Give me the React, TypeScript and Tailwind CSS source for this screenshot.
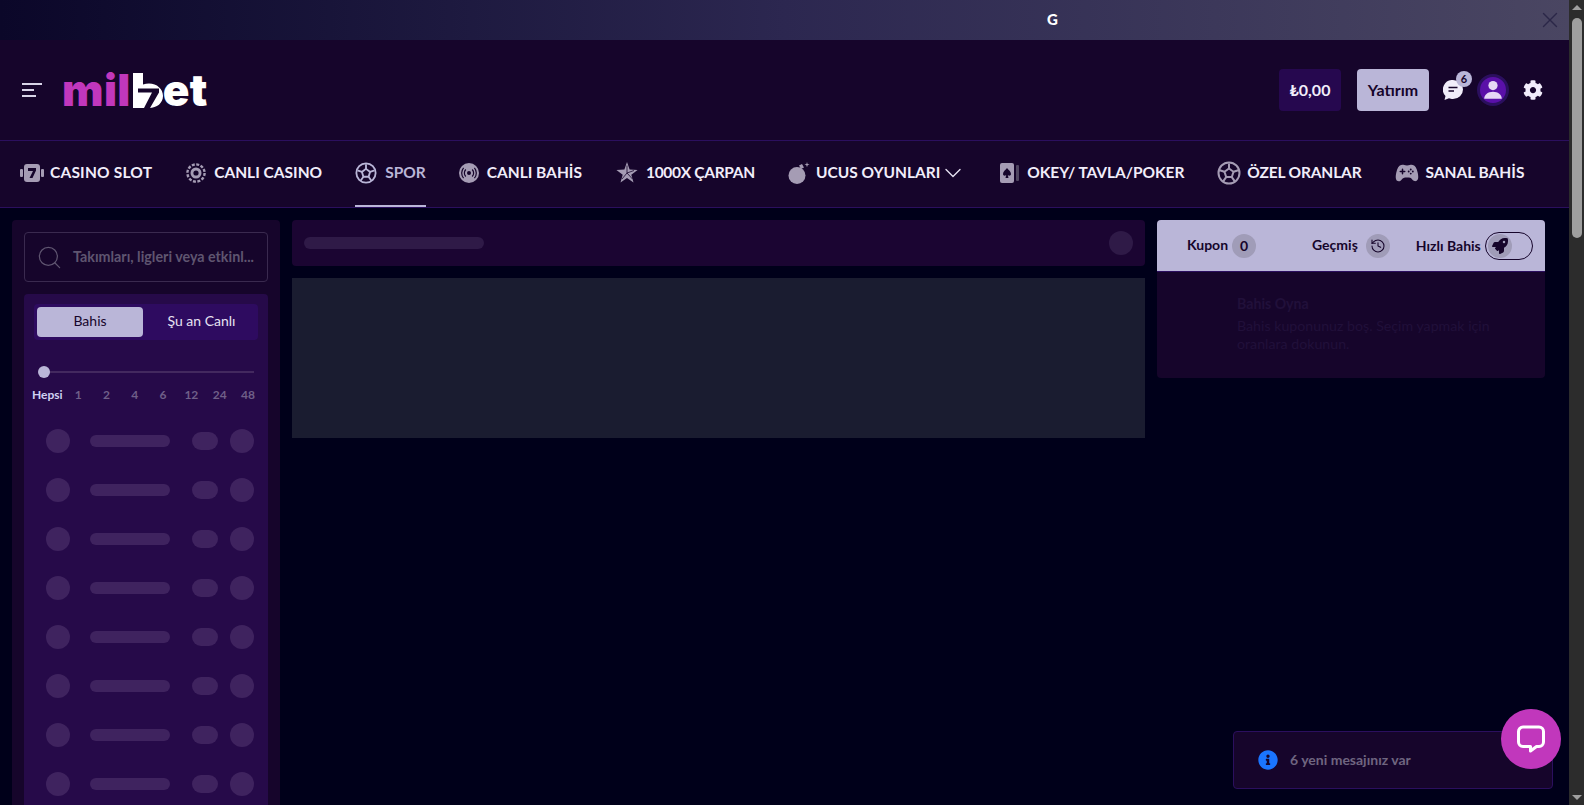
import { ChevronDown, History, Search, X } from 'lucide-react'
import { FaCog, FaInfoCircle, FaRocket } from 'react-icons/fa'
import { IoGameController } from 'react-icons/io5'
import type { ReactNode } from 'react'

const font = 'font-["Lato","Noto_Sans",sans-serif]'

function SlotIcon() {
  return (
    <svg viewBox="0 0 24 20" className="-mr-0.5 h-5 w-6" fill="#a59cb4">
      <rect x="0" y="6" width="3" height="8" rx="1" />
      <rect x="21" y="6" width="3" height="8" rx="1" />
      <rect x="4" y="1" width="16" height="18" rx="3" />
      <path d="M8 5h8v2.500L12.500 15H9.500L13 8H8z" fill="#16052b" />
    </svg>
  )
}

function ChipIcon() {
  return (
    <svg viewBox="0 0 20 20" className="h-5 w-5" fill="none">
      <circle cx="10" cy="10" r="8.600" stroke="#a59cb4" strokeWidth="2.400" strokeDasharray="3 1.500" />
      <circle cx="10" cy="10" r="5.500" fill="#a59cb4" />
      <circle cx="10" cy="10" r="2.600" fill="#16052b" />
    </svg>
  )
}

function BallIcon({ size, color }: { size: string; color: string }) {
  return (
    <svg viewBox="0 0 24 24" className={size} fill="none" stroke={color} strokeWidth="2">
      <circle cx="12" cy="12" r="10.500" />
      <path d="M12 7.500l4.500 3.300-1.700 5.300H9.200l-1.700-5.300z" />
      <path d="M12 7.500V2.500M16.500 10.800l4.800-1.600M14.800 16.100l2.900 4M9.200 16.100l-2.900 4M7.500 10.800L2.700 9.200" />
    </svg>
  )
}

function LiveIcon() {
  return (
    <svg viewBox="0 0 20 20" className="h-5 w-5" fill="none">
      <circle cx="10" cy="10" r="10" fill="#a59cb4" />
      <circle cx="10" cy="10" r="2" fill="#16052b" />
      <path d="M6.800 6.500a5 5 0 0 0 0 7M13.200 6.500a5 5 0 0 1 0 7M4.600 4.800a8 8 0 0 0 0 10.400M15.400 4.800a8 8 0 0 1 0 10.400" stroke="#16052b" strokeWidth="1.200" />
    </svg>
  )
}

function StarIcon() {
  return (
    <svg viewBox="0 0 22 22" className="h-[22px] w-[22px]">
      <path d="M11 0l2.600 7.600 8 .3-6.300 4.900 2.200 7.700L11 16l-6.500 4.500 2.200-7.700L.4 7.900l8-.3z" fill="#a59cb4" />
      <path d="M11 3.500V11l-5 6M11 11l5.500 6M11 11l7-2.500" stroke="#16052b" strokeWidth=".8" fill="none" />
    </svg>
  )
}

function BombIcon() {
  return (
    <svg viewBox="0 0 22 22" className="-mr-0.5 h-[22px] w-[22px]" fill="#a59cb4">
      <circle cx="9" cy="13.500" r="8.500" />
      <path d="M11 3.500l3-1.500 2 3.500-3 1.500z" />
      <path d="M19 0l.6 2 2 .6-2 .6-.6 2-.6-2-2-.6 2-.6z" />
    </svg>
  )
}

function CardIcon() {
  return (
    <svg viewBox="0 0 20 20" className="h-5 w-5">
      <rect x="16" y="2" width="3" height="16" rx="1" fill="#4f4560" />
      <rect x="0" y="0" width="14" height="20" rx="2" fill="#a59cb4" />
      <path d="M7 5c1.500 2 4 3.500 4 6 0 1.600-2 2.200-3.200 1l.7 3h-3l.7-3C4.900 13.200 3 12.600 3 11c0-2.500 2.500-4 4-6z" fill="#16052b" />
    </svg>
  )
}

function LiveChatIcon() {
  return (
    <svg viewBox="0 0 28 28" className="h-7 w-7" fill="none" stroke="white" strokeWidth="3" strokeLinejoin="round">
      <path d="M6 2h16a4.500 4.500 0 0 1 4.500 4.500v10.500a4.500 4.500 0 0 1-4.500 4.500h-2.500l-6 4.500v-4.500H6A4.500 4.500 0 0 1 1.500 17V6.500A4.500 4.500 0 0 1 6 2z" />
    </svg>
  )
}

type NavItemProps = {
  icon: ReactNode
  label: string
  active?: boolean
  trailing?: ReactNode
  className?: string
  labelClassName?: string
}

function NavItem({ icon, label, active, trailing, className = '', labelClassName = '' }: NavItemProps) {
  return (
    <div className={`flex h-[66px] items-center gap-2 border-b-2 ${active ? 'border-[#bab6d8]' : 'border-transparent'} ${className}`}>
      {icon}
      <span className={`whitespace-nowrap text-[15.500px] font-bold ${active ? 'text-[#bab6d8]' : 'text-[#f1edfa]'} ${labelClassName}`}>{label}</span>
      {trailing}
    </div>
  )
}

function SkeletonRow() {
  return (
    <div className="flex h-[49px] items-center pl-[22px]">
      <div className="h-6 w-6 rounded-full bg-[#3f235f]" />
      <div className="ml-5 h-3 w-20 rounded-full bg-[#3f235f]" />
      <div className="ml-[22px] h-[18px] w-[26px] rounded-full bg-[#3f235f]" />
      <div className="ml-3 h-6 w-6 rounded-full bg-[#3f235f]" />
    </div>
  )
}

export default function App() {
  const hours = ['1', '2', '4', '6', '12', '24', '48']

  return (
    <div className={`flex h-screen w-full overflow-hidden bg-[#00001a] ${font}`}>
      <div className="relative min-w-0 flex-1">
        {/* Top banner */}
        <div className="flex h-10 items-center bg-linear-to-r from-[#0b0729] via-[#2c2750] to-[#4a4662] pl-[1047px]">
          <span className="pb-0.5 text-[15px] font-black text-white">G</span>
          <X className="ml-[479px] h-[26px] w-[26px] text-[#2b2748]" strokeWidth={1.300} />
        </div>

        {/* Header */}
        <header className="flex h-[101px] items-center border-b border-[#2b0f5e] bg-[#16052b] pl-[22px] pr-[26px]">
          <div className="flex w-5 flex-col gap-[4.500px]">
            <span className="h-[1.500px] w-5 bg-[#d8d4e8]" />
            <span className="h-[1.500px] w-3 bg-[#d8d4e8]" />
            <span className="h-[1.500px] w-[14px] bg-[#d8d4e8]" />
          </div>
          <div className="ml-5 flex items-end font-['Inter',sans-serif] text-[44px] font-black leading-[35px] tracking-[0.4px]">
            <span className="text-[#c137bc]">mil</span>
            <svg viewBox="0 0 30 35" className="ml-0.5 h-[35px] w-[30px] shrink-0">
              <path d="M0 0h10v11.500c2-.8 4-1 6-1 8 0 14 5.500 14 12.500s-6 12-14 12H0z" fill="white" />
              <path d="M5 15.500h21v4l-9 15.500h-6l8-15.500H5z" fill="#16052b" />
            </svg>
            <span className="text-white">et</span>
          </div>
          <div className="ml-auto flex h-[42px] w-[62px] items-center justify-center rounded bg-[#26084f] text-[16px] font-bold text-[#f1edfa]">₺0,00</div>
          <div className="ml-4 flex h-[42px] w-[72px] items-center justify-center rounded bg-[#bab6d8] text-[16px] font-bold text-[#16052b]">Yatırım</div>
          <div className="relative ml-[14px]">
            <svg viewBox="0 0 20 20" className="h-5 w-5">
              <path d="M10 0a10 9.500 0 0 1 0 19c-1.500 0-3-.3-4-.8L1.500 20l1-4A9.500 9.500 0 0 1 10 0z" fill="#f1edfa" />
              <path d="M5.500 7.500h9M5.500 11h5.500" stroke="#16052b" strokeWidth="1.600" />
            </svg>
            <span className="absolute -right-[9px] -top-[9px] flex h-4 w-4 items-center justify-center rounded-full bg-[#bab6d8] text-[11px] font-bold text-[#16052b]">6</span>
          </div>
          <div className="ml-[14px] flex h-8 w-8 items-center justify-center rounded-full border-[3px] border-[#2b0f5e] bg-[#5a10a8]">
            <svg viewBox="0 0 20 20" className="h-[22px] w-[22px]" fill="#e6d8f5">
              <circle cx="10" cy="6" r="4.200" />
              <path d="M2 18c0-4 3.500-6.500 8-6.500s8 2.500 8 6.500z" />
            </svg>
          </div>
          <FaCog className="ml-[14px] h-5 w-5 text-[#f1edfa]" />
        </header>

        {/* Category nav */}
        <nav className="flex h-[67px] items-center gap-[34px] border-b border-[#2b0f5e] bg-[#16052b] pl-5">
          <NavItem icon={<SlotIcon />} label="CASINO SLOT" labelClassName="tracking-[0.2px]" />
          <NavItem icon={<ChipIcon />} label="CANLI CASINO" className="-mr-px" />
          <NavItem icon={<BallIcon size="h-[22px] w-[22px]" color="#bab6d8" />} label="SPOR" active className="-mr-px" />
          <NavItem icon={<LiveIcon />} label="CANLI BAHİS" />
          <NavItem icon={<StarIcon />} label="1000X ÇARPAN" labelClassName="-tracking-[0.3px]" className="-mr-px" />
          <NavItem
            icon={<BombIcon />}
            label="UCUS OYUNLARI"
            trailing={<ChevronDown className="-ml-[9px] -mr-px h-7 w-7 text-[#e6e2f2]" strokeWidth={1.200} />}
          />
          <NavItem icon={<CardIcon />} label="OKEY/ TAVLA/POKER" labelClassName="-ml-px -tracking-[0.05px]" className="-mr-px" />
          <NavItem icon={<BallIcon size="h-6 w-6" color="#a59cb4" />} label="ÖZEL ORANLAR" labelClassName="-ml-0.5 -tracking-[0.15px]" />
          <NavItem icon={<IoGameController className="h-[24px] w-[24px] text-[#a59cb4]" />} label="SANAL BAHİS" labelClassName="-ml-0.5" />
        </nav>

        {/* Content */}
        <div className="flex items-start gap-3 pl-3 pr-6 pt-[12px]">
          <aside className="w-[268px] shrink-0 rounded-t bg-[#16052b] px-3 pt-3">
            <div className="flex h-[50px] items-center gap-[10px] rounded border border-[#3a2a4f] pl-[11px] pr-2">
              <Search className="h-[27px] w-[27px] shrink-0 text-[#5f5570]" strokeWidth={1.100} />
              <span className="whitespace-nowrap text-[14.300px] font-bold text-[#5f5570]">Takımları, ligleri veya etkinl...</span>
            </div>
            <div className="mt-3 rounded-t bg-[#260a49] pt-[10px]">
              <div className="mx-[10px] flex h-9 items-center rounded bg-[#2e0b60] p-[3px]">
                <div className="flex h-[30px] w-[106px] items-center justify-center rounded bg-[#bab6d8] pb-1 text-[14px] text-[#16052b]">Bahis</div>
                <div className="flex-1 pb-1 pl-[5px] text-center text-[14px] text-[#e6e2f2]">Şu an Canlı</div>
              </div>
              <div className="relative mx-[14px] mt-[26px] h-3">
                <div className="absolute left-1 right-0 top-[5px] h-0.5 bg-[#43295f]" />
                <div className="absolute left-0 top-0 h-3 w-3 rounded-full bg-[#bab6d8]" />
              </div>
              <div className="mt-2 flex items-center pl-2 pr-[3px] text-[12px] font-bold text-[#6f5f88]">
                <span className="w-[32px] text-[#cfd2f2]">Hepsi</span>
                {hours.map((h) => (
                  <span key={h} className="w-[28.300px] text-center">{h}</span>
                ))}
              </div>
              <div className="mt-3">
                {Array.from({ length: 8 }, (_, i) => (
                  <SkeletonRow key={i} />
                ))}
              </div>
            </div>
          </aside>

          <main className="min-w-0 flex-1">
            <div className="flex h-[46px] items-center justify-between rounded-sm bg-[#1b0532] pl-3 pr-3">
              <div className="h-3 w-[180px] rounded-full bg-[#2f1a47]" />
              <div className="h-6 w-6 rounded-full bg-[#2f1a47]" />
            </div>
            <div className="mt-3 h-40 bg-[#1a1c30]" />
          </main>

          <aside className="w-[388px] shrink-0 overflow-hidden rounded bg-[#16052b]">
            <div className="flex h-[52px] items-center border-b border-[#2b0f5e] bg-[#bab6d8] pl-[30px] text-[14px] font-bold text-[#16052b]">
              <span className="pb-[3px]">Kupon</span>
              <span className="ml-1 flex h-6 w-6 items-center justify-center rounded-full bg-[#a09cb8] text-[14px]">0</span>
              <span className="ml-[56px] pb-0.5">Geçmiş</span>
              <span className="ml-2 flex h-6 w-6 items-center justify-center rounded-full bg-[#a09cb8]">
                <History className="h-4 w-4" strokeWidth={1.600} />
              </span>
              <span className="ml-[26px]">Hızlı Bahis</span>
              <span className="ml-1 flex h-7 w-12 items-center rounded-full border border-[#16052b] pl-[2px]">
                <span className="flex h-6 w-6 items-center justify-center rounded-full bg-[#a09cb8]">
                  <FaRocket className="h-4 w-4" />
                </span>
              </span>
            </div>
            <div className="h-[106px] pl-20 pt-[23px] text-[14.200px] leading-[18px] text-[#21103a]">
              <div className="mb-1 font-bold">Bahis Oyna</div>
              <div className="w-[270px]">Bahis kuponunuz boş. Seçim yapmak için oranlara dokunun.</div>
            </div>
          </aside>
        </div>

        {/* Message toast and chat bubble lie over the page */}
        <div className="absolute left-[1233px] top-[731px] flex h-[58px] w-[320px] items-center gap-3 rounded border border-[#2b0f5e] bg-[#16052b] pl-[24px]">
          <FaInfoCircle className="h-5 w-5 text-[#1a75ff]" />
          <span className="pb-0.5 text-[14px] font-bold text-[#6f6580]">6 yeni mesajınız var</span>
        </div>
        <div className="absolute left-[1501px] top-[709px] flex h-[60px] w-[60px] items-center justify-center rounded-full bg-[#c137bc]">
          <LiveChatIcon />
        </div>
      </div>

      {/* Browser scrollbar */}
      <div className="flex w-[15px] shrink-0 flex-col items-center bg-[#2c2c2c]">
        <div className="mt-[5px] h-0 w-0 border-x-[5px] border-b-[5px] border-x-transparent border-b-[#a0a0a0]" />
        <div className="mt-[8px] h-[220px] w-[10px] rounded-full bg-[#9f9f9f]" />
        <div className="mb-[5px] mt-auto h-0 w-0 border-x-[5px] border-t-[5px] border-x-transparent border-t-[#a0a0a0]" />
      </div>
    </div>
  )
}
